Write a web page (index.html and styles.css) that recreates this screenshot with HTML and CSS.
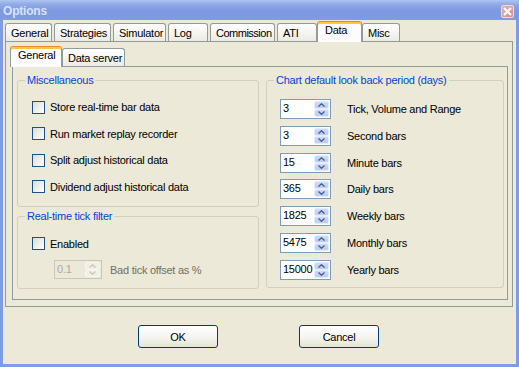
FILE: index.html
```html
<!DOCTYPE html>
<html>
<head>
<meta charset="utf-8">
<title>Options</title>
<link rel="stylesheet" href="styles.css">
</head>
<body>
<div class="window">
  <div class="titlebar">
    <span class="title">Options</span>
    <span class="close"><svg width="9" height="9" viewBox="0 0 9 9"><path d="M1 1 L8 8 M8 1 L1 8" stroke="#fff" stroke-width="2"/></svg></span>
  </div>
  <div class="frame">
    <div class="tabstrip">
      <div class="tab w-general">General</div>
      <div class="tab w-strategies">Strategies</div>
      <div class="tab w-simulator">Simulator</div>
      <div class="tab w-log">Log</div>
      <div class="tab w-commission">Commission</div>
      <div class="tab w-ati">ATI</div>
      <div class="tab active w-data">Data</div>
      <div class="tab w-misc">Misc</div>
    </div>
    <div class="page outer">
      <div class="tabstrip inner-strip">
        <div class="tab active w-igeneral">General</div>
        <div class="tab w-dataserver">Data server</div>
      </div>
      <div class="page inner">
        <div class="leftcol">
          <fieldset class="group misc">
            <legend>Miscellaneous</legend>
            <div class="rows misc-rows">
              <div class="check"><span class="box"></span><span>Store real-time bar data</span></div>
              <div class="check"><span class="box"></span><span>Run market replay recorder</span></div>
              <div class="check"><span class="box"></span><span>Split adjust historical data</span></div>
              <div class="check"><span class="box"></span><span>Dividend adjust historical data</span></div>
            </div>
          </fieldset>
          <fieldset class="group tick">
            <legend>Real-time tick filter</legend>
            <div class="rows tick-rows">
              <div class="check"><span class="box"></span><span>Enabled</span></div>
              <div class="offset-row">
                <span class="spin disabled narrow"><span class="spin-value">0.1</span><span class="spin-btns"><span class="spin-btn"><svg width="7" height="4" viewBox="0 0 7 4"><polyline points="0.5,3.5 3.5,0.8 6.5,3.5" fill="none" stroke="#c9c7ba" stroke-width="1.4"/></svg></span><span class="spin-btn"><svg width="7" height="4" viewBox="0 0 7 4"><polyline points="0.5,0.5 3.5,3.2 6.5,0.5" fill="none" stroke="#c9c7ba" stroke-width="1.4"/></svg></span></span></span>
                <span class="disabled-label">Bad tick offset as %</span>
              </div>
            </div>
          </fieldset>
        </div>
        <fieldset class="group chart">
          <legend>Chart default look back period (days)</legend>
          <div class="rows chart-rows">
            <div class="chart-row"><span class="spin"><span class="spin-value">3</span><span class="spin-btns"><span class="spin-btn"><svg width="7" height="4" viewBox="0 0 7 4"><polyline points="0.5,3.5 3.5,0.8 6.5,3.5" fill="none" stroke="#4d6185" stroke-width="1.4"/></svg></span><span class="spin-btn"><svg width="7" height="4" viewBox="0 0 7 4"><polyline points="0.5,0.5 3.5,3.2 6.5,0.5" fill="none" stroke="#4d6185" stroke-width="1.4"/></svg></span></span></span><span class="chart-label">Tick, Volume and Range</span></div>
            <div class="chart-row"><span class="spin"><span class="spin-value">3</span><span class="spin-btns"><span class="spin-btn"><svg width="7" height="4" viewBox="0 0 7 4"><polyline points="0.5,3.5 3.5,0.8 6.5,3.5" fill="none" stroke="#4d6185" stroke-width="1.4"/></svg></span><span class="spin-btn"><svg width="7" height="4" viewBox="0 0 7 4"><polyline points="0.5,0.5 3.5,3.2 6.5,0.5" fill="none" stroke="#4d6185" stroke-width="1.4"/></svg></span></span></span><span class="chart-label">Second bars</span></div>
            <div class="chart-row"><span class="spin"><span class="spin-value">15</span><span class="spin-btns"><span class="spin-btn"><svg width="7" height="4" viewBox="0 0 7 4"><polyline points="0.5,3.5 3.5,0.8 6.5,3.5" fill="none" stroke="#4d6185" stroke-width="1.4"/></svg></span><span class="spin-btn"><svg width="7" height="4" viewBox="0 0 7 4"><polyline points="0.5,0.5 3.5,3.2 6.5,0.5" fill="none" stroke="#4d6185" stroke-width="1.4"/></svg></span></span></span><span class="chart-label">Minute bars</span></div>
            <div class="chart-row"><span class="spin"><span class="spin-value">365</span><span class="spin-btns"><span class="spin-btn"><svg width="7" height="4" viewBox="0 0 7 4"><polyline points="0.5,3.5 3.5,0.8 6.5,3.5" fill="none" stroke="#4d6185" stroke-width="1.4"/></svg></span><span class="spin-btn"><svg width="7" height="4" viewBox="0 0 7 4"><polyline points="0.5,0.5 3.5,3.2 6.5,0.5" fill="none" stroke="#4d6185" stroke-width="1.4"/></svg></span></span></span><span class="chart-label">Daily bars</span></div>
            <div class="chart-row"><span class="spin"><span class="spin-value">1825</span><span class="spin-btns"><span class="spin-btn"><svg width="7" height="4" viewBox="0 0 7 4"><polyline points="0.5,3.5 3.5,0.8 6.5,3.5" fill="none" stroke="#4d6185" stroke-width="1.4"/></svg></span><span class="spin-btn"><svg width="7" height="4" viewBox="0 0 7 4"><polyline points="0.5,0.5 3.5,3.2 6.5,0.5" fill="none" stroke="#4d6185" stroke-width="1.4"/></svg></span></span></span><span class="chart-label">Weekly bars</span></div>
            <div class="chart-row"><span class="spin"><span class="spin-value">5475</span><span class="spin-btns"><span class="spin-btn"><svg width="7" height="4" viewBox="0 0 7 4"><polyline points="0.5,3.5 3.5,0.8 6.5,3.5" fill="none" stroke="#4d6185" stroke-width="1.4"/></svg></span><span class="spin-btn"><svg width="7" height="4" viewBox="0 0 7 4"><polyline points="0.5,0.5 3.5,3.2 6.5,0.5" fill="none" stroke="#4d6185" stroke-width="1.4"/></svg></span></span></span><span class="chart-label">Monthly bars</span></div>
            <div class="chart-row"><span class="spin"><span class="spin-value">15000</span><span class="spin-btns"><span class="spin-btn"><svg width="7" height="4" viewBox="0 0 7 4"><polyline points="0.5,3.5 3.5,0.8 6.5,3.5" fill="none" stroke="#4d6185" stroke-width="1.4"/></svg></span><span class="spin-btn"><svg width="7" height="4" viewBox="0 0 7 4"><polyline points="0.5,0.5 3.5,3.2 6.5,0.5" fill="none" stroke="#4d6185" stroke-width="1.4"/></svg></span></span></span><span class="chart-label">Yearly bars</span></div>
          </div>
        </fieldset>
      </div>
    </div>
    <div class="buttons">
      <div class="btn">OK</div>
      <div class="btn">Cancel</div>
    </div>
  </div>
</div>
</body>
</html>
```

FILE: styles.css
```css
* { box-sizing: border-box; }
html, body { margin: 0; padding: 0; }
body {
  width: 519px;
  height: 367px;
  overflow: hidden;
  background: #ece9d8;
  font-family: "Liberation Sans", Arial, sans-serif;
  font-size: 11px;
  letter-spacing: -0.25px;
  color: #000;
}
.window {
  width: 519px;
  height: 367px;
  display: flex;
  flex-direction: column;
  background: #7f9be2;
}
.titlebar {
  height: 20px;
  flex: none;
  display: flex;
  align-items: center;
  justify-content: space-between;
  padding: 0 5px 0 3px;
  background: linear-gradient(#afc4f1 0, #92ace8 4px, #7e9ae2 10px, #7c98e1 15px, #809ce2 20px);
}
.title {
  font: bold 12px "Liberation Sans", sans-serif;
  color: #d8e3f9;
  letter-spacing: -0.2px;
  padding-top: 1px;
}
.close {
  width: 13px;
  height: 13px;
  margin-top: 2px;
  border: 1px solid #f2d6d8;
  border-radius: 2px;
  background: linear-gradient(135deg, #e8b0ad, #d98f8b);
  display: flex;
  align-items: center;
  justify-content: center;
}
.close svg { display: block; }
.frame {
  flex: 1;
  display: flex;
  flex-direction: column;
  margin: 0 3px 3px 3px;
  background: #ece9d8;
}
.tabstrip {
  display: flex;
  align-items: flex-end;
  height: 20px;
  margin-top: 1px;
  padding-left: 2px;
  gap: 2px;
  position: relative;
  z-index: 1;
  flex: none;
}
.tab {
  height: 18px;
  border: 1px solid #919b9c;
  border-bottom: 0;
  border-radius: 3px 3px 0 0;
  background: linear-gradient(#ffffff, #f6f5f1 50%, #ebeae4);
  padding: 3px 0 0 5px;
  line-height: 13px;
  white-space: nowrap;
}
.tab.active {
  height: 21px;
  margin: 0 -2px -1px -2px;
  padding: 2px 0 0 7px;
  background: #fcfcfe;
  border-top: 1px solid #e68b2c;
  box-shadow: inset 0 2px 0 #ffc83c;
}
.w-general { width: 47px; }
.w-strategies { width: 57px; }
.w-simulator { width: 53px; }
.w-log { width: 40px; }
.w-commission { width: 65px; letter-spacing: -0.5px; }
.w-ati { width: 40px; }
.w-data { width: 45px; }
.w-misc { width: 38px; }
.w-igeneral { width: 52px; }
.w-dataserver { width: 63px; }

.page {
  border: 1px solid #919b9c;
  background: #ece9d8;
}
.page.outer {
  height: 266px;
  margin: 0 3px 0 2px;
  padding: 4px 4px 6px 6px;
  display: flex;
  flex-direction: column;
  flex: none;
}
.inner-strip {
  margin-top: 0;
  padding-left: 0;
}
.page.inner {
  height: 234px;
  padding: 7px 3px 0 4px;
  display: grid;
  grid-template-columns: 242px 238px;
  column-gap: 7px;
  align-items: start;
}
.leftcol {
  display: flex;
  flex-direction: column;
  gap: 3px;
}
fieldset.group {
  border: 1px solid #d0d0bf;
  border-radius: 3px;
  margin: 0;
  min-width: 0;
  padding: 10px 0 9.5px 0;
}
fieldset.group legend {
  padding: 0 2px;
  margin-left: 7px;
  color: #0046d5;
  line-height: 13px;
}
fieldset.tick { padding: 10.5px 0 9px 0; }
fieldset.chart { padding: 12px 0 0 0; height: 214px; }

.rows { display: flex; flex-direction: column; padding-left: 14px; }
.misc-rows, .tick-rows { gap: 6.5px; }
.chart-rows { gap: 6.8px; padding-left: 13px; }

.check {
  display: flex;
  align-items: center;
  height: 20px;
  gap: 5px;
}
.box {
  width: 13px;
  height: 13px;
  flex: none;
  border: 1px solid #1c5180;
  background: linear-gradient(135deg, #dcdcd7, #ffffff);
}
.offset-row {
  display: flex;
  align-items: center;
  height: 19px;
  padding-left: 22px;
}
.disabled-label {
  margin-left: 8px;
  color: #716f64;
}
.chart-row {
  display: flex;
  align-items: center;
  height: 20px;
}
.chart-label { margin-left: 16px; }

.spin {
  display: flex;
  width: 51px;
  height: 20px;
  border: 1px solid #7f9db9;
  background: #fff;
  flex: none;
}
.spin.narrow { width: 48px; height: 19px; }
.spin-value {
  flex: 1;
  padding-left: 2px;
  line-height: 17px;
  overflow: hidden;
}
.spin-btns {
  width: 16px;
  display: flex;
  flex-direction: column;
  padding: 1px 1px 1px 0;
}
.spin-btn {
  flex: 1;
  display: flex;
  align-items: center;
  justify-content: center;
  border: 1px solid #e5ecfd;
  border-radius: 2px;
  background: linear-gradient(#cddbfc, #b9cdf8);
}
.spin-btn svg { display: block; }
.spin.disabled {
  border-color: #c9c7ba;
  background: #ece9d8;
  color: #aca899;
}
.spin.disabled .spin-btn {
  border-color: #f7f6f1;
  background: #f1efe6;
}

.buttons {
  display: flex;
  justify-content: center;
  gap: 81px;
  margin-top: 18px;
  padding-right: 2px;
}
.btn {
  width: 80px;
  height: 23px;
  border: 1px solid #003c74;
  border-radius: 3px;
  background: linear-gradient(#ffffff, #f5f4ef 55%, #e6e3d6);
  display: flex;
  align-items: center;
  justify-content: center;
}
```
